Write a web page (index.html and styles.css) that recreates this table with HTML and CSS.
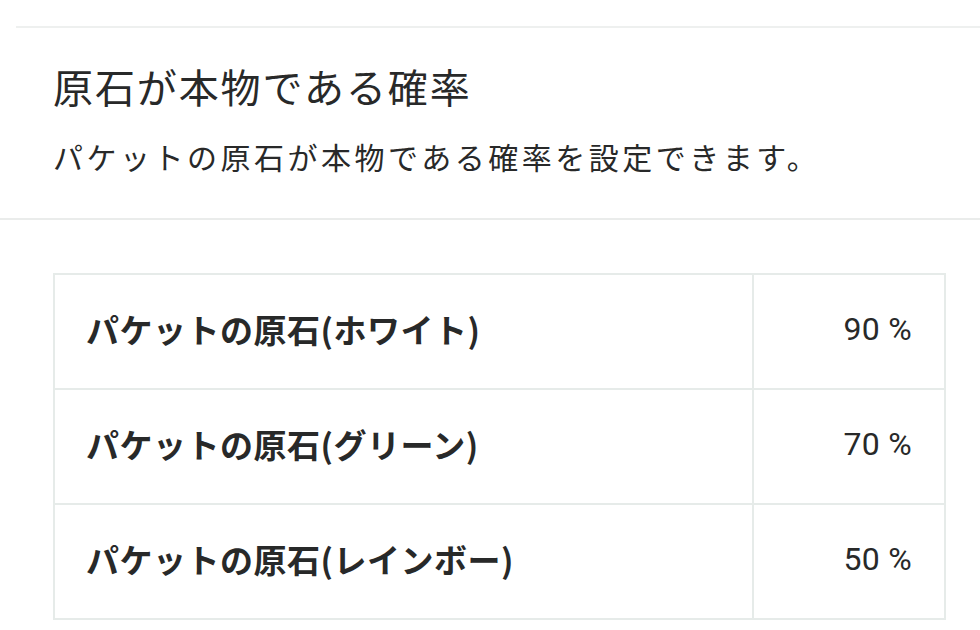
FILE: index.html
```html
<!DOCTYPE html>
<html lang="ja">
<head>
<meta charset="utf-8">
<link rel="stylesheet" href="styles.css">
</head>
<body>
<div class="page">
  <div class="top-rule"></div>
  <header class="head">
    <h1 class="title">原石が本物である確率</h1>
    <p class="desc">パケットの原石が本物である確率を設定できます。</p>
  </header>
  <div class="section">
    <table class="rates">
      <tr><td class="label">パケットの原石(ホワイト)</td><td class="value">90 %</td></tr>
      <tr><td class="label">パケットの原石(グリーン)</td><td class="value">70 %</td></tr>
      <tr><td class="label">パケットの原石(レインボー)</td><td class="value">50 %</td></tr>
    </table>
  </div>
</div>
</body>
</html>
```
FILE: styles.css
```css
html, body {
  margin: 0;
  padding: 0;
  background: #ffffff;
}
body {
  font-family: "Noto Sans CJK JP", "Noto Sans", sans-serif;
  color: #282929;
  width: 980px;
  height: 630px;
  overflow: hidden;
}
.page {
  padding-top: 26px;
}
.top-rule {
  margin-left: 16px;
  height: 2px;
  background: #eef0ef;
}
.head {
  padding: 32px 53px 0 53px;
  height: 192px;
  box-sizing: border-box;
  border-bottom: 2px solid #eaeceb;
}
.title {
  margin: 0;
  font-size: 40px;
  font-weight: 400;
  line-height: 52px;
  letter-spacing: 1.9px;
}
.desc {
  margin: 23px 0 0 0;
  font-size: 30px;
  line-height: 42px;
  letter-spacing: 3.5px;
}
.section {
  padding: 53px 35px 0 53px;
}
.rates {
  width: 893px;
  border-collapse: collapse;
  border: 2px solid #e6ebe9;
}
.rates td {
  border: 2px solid #e6ebe9;
  height: 107px;
  padding: 0 0 6px 0;
  vertical-align: middle;
}
.label {
  width: 666px;
  padding-left: 31px !important;
  font-size: 33px;
  font-weight: 700;
  letter-spacing: 0.5px;
}
.value {
  text-align: right;
  padding-right: 32px !important;
  font-family: Roboto, "Noto Sans", sans-serif;
  font-size: 32px;
  letter-spacing: 0.3px;
}
```
